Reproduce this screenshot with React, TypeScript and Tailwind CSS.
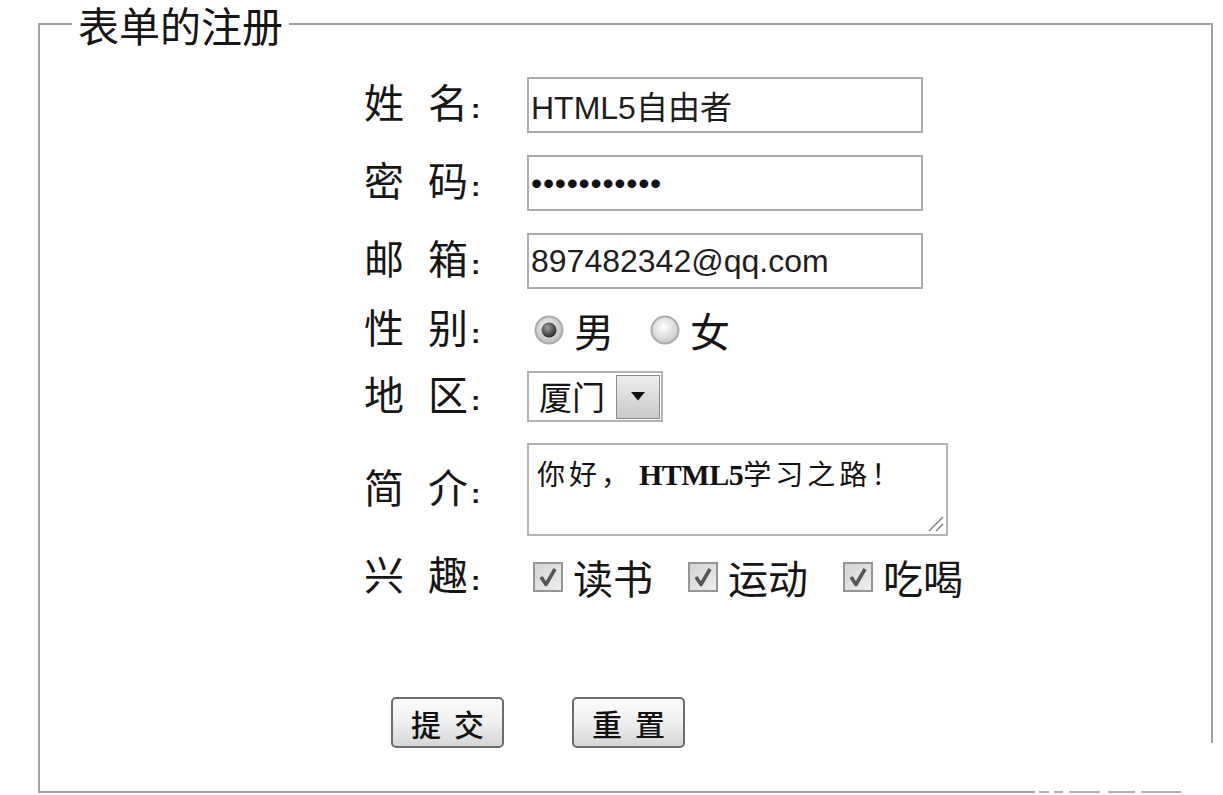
import type { ReactNode } from "react";

const cjk = "font-['Noto_Sans_CJK_SC',sans-serif]";
const latin = "font-['Liberation_Sans','Noto_Sans_CJK_SC',sans-serif]";

type Hobby = { id: string; label: string };

const hobbies: Hobby[] = [
  { id: "read", label: "读书" },
  { id: "sport", label: "运动" },
  { id: "food", label: "吃喝" },
];

// trailing bits of the bottom rule, as the scan shows them
const tailSegments = [
  { gap: 4, width: 10 },
  { gap: 5, width: 9 },
  { gap: 6, width: 31 },
  { gap: 8, width: 27 },
  { gap: 6, width: 40 },
];

function FieldLabel({ a, b }: { a: string; b: string }) {
  return (
    <div className="flex w-[163px] shrink-0 items-baseline text-[40px] leading-[40px] text-[#161616]">
      <span className="w-[64px]">{a}</span>
      <span className="w-[43px]">{b}</span>
      <span className="font-['Liberation_Sans',sans-serif] text-[28px] font-bold">:</span>
    </div>
  );
}

function Row({
  label,
  height,
  className = "",
  children,
}: {
  label: [string, string];
  height: string;
  className?: string;
  children: ReactNode;
}) {
  return (
    <div className={`flex items-center ${height} ${className}`}>
      <FieldLabel a={label[0]} b={label[1]} />
      {children}
    </div>
  );
}

function Radio({ checked = false }: { checked?: boolean }) {
  const id = checked ? "radio-on" : "radio-off";
  return (
    <svg width="30" height="30" viewBox="0 0 30 30" className="shrink-0">
      <defs>
        <radialGradient id={id} cx="45%" cy="40%" r="60%">
          <stop offset="0%" stopColor={checked ? "#f6f6f6" : "#ffffff"} />
          <stop offset="100%" stopColor={checked ? "#bcbcbc" : "#c9c9c9"} />
        </radialGradient>
        <radialGradient id={`${id}-dot`} cx="40%" cy="35%" r="65%">
          <stop offset="0%" stopColor="#a0a0a0" />
          <stop offset="100%" stopColor="#2a2a2a" />
        </radialGradient>
      </defs>
      <circle cx="15" cy="15" r="13.5" fill={`url(#${id})`} stroke="#acacac" strokeWidth="2" />
      {checked ? <circle cx="15" cy="15" r="7.5" fill={`url(#${id}-dot)`} /> : null}
    </svg>
  );
}

function CheckBox() {
  return (
    <svg width="30" height="30" viewBox="0 0 30 30" className="shrink-0">
      <defs>
        <linearGradient id="cb-fill" x1="0" y1="0" x2="1" y2="1">
          <stop offset="0%" stopColor="#d2d2d2" />
          <stop offset="100%" stopColor="#efefef" />
        </linearGradient>
      </defs>
      <rect x="1" y="1" width="28" height="28" fill="url(#cb-fill)" stroke="#959595" strokeWidth="2" />
      <path d="M8 15 L13 22.5 L22 7" fill="none" stroke="#555" strokeWidth="3.5" strokeLinejoin="round" />
    </svg>
  );
}

function PlainButton({ chars }: { chars: [string, string] }) {
  return (
    <button
      type="button"
      className="flex h-[51px] w-[113px] items-center justify-center gap-[13px] rounded-[5px] border-2 border-[#6c6c6c] bg-[linear-gradient(#fbfbfb,#f1f1f1_45%,#d6d6d6)] text-[30px] font-medium leading-none text-[#111]"
    >
      <span>{chars[0]}</span>
      <span>{chars[1]}</span>
    </button>
  );
}

export default function App() {
  return (
    <div className={`h-[795px] w-[1223px] overflow-hidden bg-white ${cjk}`}>
      <fieldset className="ml-[38px] h-[743px] w-[1175px] border-x-2 border-t-2 border-[#a3a3a3]">
        <legend className="ml-[32px] px-[6px] text-[41px] leading-[48px] text-[#161616]">
          表单的注册
        </legend>

        <div className="flex flex-col pl-[324px] pt-[29px]">
          <Row label={["姓", "名"]} height="h-[56px]">
            <input
              readOnly
              value="HTML5自由者"
              className={`h-[56px] w-[396px] border-2 border-[#acacac] px-[2px] text-[32px] text-[#1e1e1e] outline-none ${latin}`}
            />
          </Row>

          <Row label={["密", "码"]} height="h-[56px]" className="mt-[22px]">
            <input
              readOnly
              type="password"
              value="12345678901"
              className={`h-[56px] w-[396px] border-2 border-[#acacac] px-[2px] text-[32px] tracking-[0.7px] text-[#111] outline-none ${latin}`}
            />
          </Row>

          <Row label={["邮", "箱"]} height="h-[56px]" className="mt-[22px]">
            <input
              readOnly
              value="897482342@qq.com"
              className={`h-[56px] w-[396px] border-2 border-[#acacac] px-[2px] text-[32px] text-[#1e1e1e] outline-none ${latin}`}
            />
          </Row>

          <Row label={["性", "别"]} height="h-[40px]" className="mt-[21px]">
            <div className="ml-[7px] flex items-center text-[40px] leading-[40px] text-[#161616]">
              <Radio checked />
              <span className="ml-[10px]">男</span>
              <span className="ml-[36px]">
                <Radio />
              </span>
              <span className="ml-[10px]">女</span>
            </div>
          </Row>

          <Row label={["地", "区"]} height="h-[51px]" className="mt-[21px]">
            <div className="flex h-[51px] w-[136px] items-center border-2 border-[#b2b2b2] pl-[10px] text-[33px] leading-none text-[#161616]">
              <span>厦门</span>
              <span className="ml-auto mr-[1px] flex h-[44px] w-[44px] items-center justify-center border border-[#8c8c8c] bg-[linear-gradient(#eeeeee,#c9c9c9)]">
                <svg width="14" height="9" viewBox="0 0 14 9">
                  <path d="M0 0 H14 L7 8.5 Z" fill="#111" />
                </svg>
              </span>
            </div>
          </Row>

          <Row label={["简", "介"]} height="h-[93px]" className="mt-[21px]">
            <div className="relative h-[93px] w-[421px] border-2 border-[#b4b4b4] pl-[8px] pt-[12px] text-[28px] leading-[32px] tracking-[4px] text-[#111]">
              你好，
              <span className="ml-[6px] font-['Liberation_Serif',serif] text-[30px] font-bold tracking-[-0.5px]">
                HTML5
              </span>
              学习之路！
              <svg
                width="18"
                height="18"
                viewBox="0 0 18 18"
                className="absolute bottom-[2px] right-[2px]"
              >
                <path d="M3 17 L17 3 M10 17 L17 10" stroke="#8a8a8a" strokeWidth="1.6" />
              </svg>
            </div>
          </Row>

          <Row label={["兴", "趣"]} height="h-[40px]" className="mt-[21px]">
            <div className="ml-[6px] flex items-center text-[40px] leading-[40px] text-[#161616]">
              {hobbies.map((hobby, index) => (
                <label
                  key={hobby.id}
                  className={`flex items-center gap-[10px] ${index > 0 ? "ml-[35px]" : ""}`}
                >
                  <CheckBox />
                  <span>{hobby.label}</span>
                </label>
              ))}
            </div>
          </Row>

          <div className="ml-[27px] mt-[100px] flex gap-[68px]">
            <PlainButton chars={["提", "交"]} />
            <PlainButton chars={["重", "置"]} />
          </div>
        </div>
      </fieldset>

      <div className="ml-[38px] flex h-[50px] w-[1150px] items-end border-l-2 border-[#a3a3a3]">
        <div className="h-[2px] w-[995px] bg-[#a3a3a3]" />
        {tailSegments.map((seg, i) => (
          <div
            key={i}
            className="h-[2px] bg-[#b0b0b0]"
            style={{ marginLeft: seg.gap, width: seg.width }}
          />
        ))}
      </div>
    </div>
  );
}
